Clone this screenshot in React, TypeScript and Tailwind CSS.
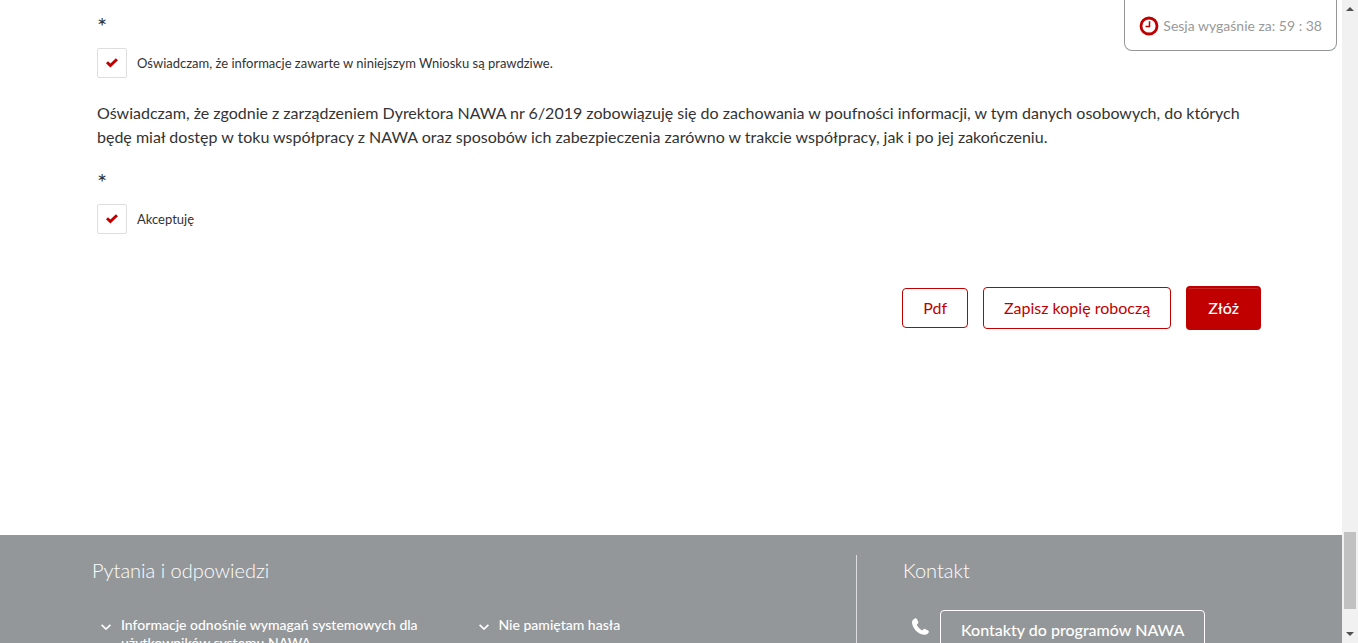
import { useState } from "react";
import type { ReactNode } from "react";

function Declaration({ id, children }: { id: string; children: ReactNode }) {
  const [checked, setChecked] = useState(true);
  return (
    <div>
      <p className="h-6 text-2xl leading-7">*</p>
      <div className="mt-3 flex items-center gap-2.5">
        <span className="grid size-[30px] shrink-0 place-items-center">
          <input
            id={id}
            type="checkbox"
            checked={checked}
            onChange={(e) => setChecked(e.target.checked)}
            className="col-start-1 row-start-1 size-[30px] appearance-none rounded-xs border border-[#dedede] bg-white"
          />
          {checked && (
            <svg
              viewBox="0 0 12 10"
              className="pointer-events-none col-start-1 row-start-1 h-[10px] w-3"
              aria-hidden="true"
            >
              <path d="M0 5.2 2 3.2 4.4 5.5 9.9 0.3 12 2.2 4.4 9.4Z" fill="#c00000" />
            </svg>
          )}
        </span>
        <label htmlFor={id} className="text-[13px] leading-5">
          {children}
        </label>
      </div>
    </div>
  );
}

function SessionTimer() {
  return (
    <div className="absolute top-0 right-[5px] flex h-[51px] items-center gap-1 rounded-b-lg border border-t-0 border-[#949799] bg-white px-3.5 pt-px">
      <svg viewBox="0 0 20 20" className="size-5" fill="none" stroke="#c00000" aria-hidden="true">
        <circle cx="10" cy="10" r="8" strokeWidth="2.8" />
        <path d="M10.5 5.2V10.5H6.5" strokeWidth="1.5" />
      </svg>
      <span className="text-sm leading-5 text-[#999999]">Sesja wygaśnie za: 59 : 38</span>
    </div>
  );
}

function Question({ children }: { children: ReactNode }) {
  return (
    <a href="#pytania" className="flex flex-1 items-start gap-2.5 pr-10">
      <svg viewBox="0 0 10 6" className="mt-2 h-1.5 w-2.5 shrink-0" fill="none" stroke="#fff" strokeWidth="1.7" aria-hidden="true">
        <path d="M0.6 0.8 5 5 9.4 0.8" />
      </svg>
      <span className="text-sm leading-[18px] font-medium">{children}</span>
    </a>
  );
}

function Footer() {
  return (
    <footer className="flex flex-1 bg-[#949799] pt-5 pl-[92px] text-white">
      <section className="w-[61.2%] border-r border-[#dddddd] pt-px">
        <h2 className="text-xl leading-7 font-light">Pytania i odpowiedzi</h2>
        <div className="mt-8 flex pl-[9px]">
          <Question>Informacje odnośnie wymagań systemowych dla użytkowników systemu NAWA</Question>
          <Question>Nie pamiętam hasła</Question>
        </div>
      </section>
      <section className="flex-1 pt-px pl-[46px]">
        <h2 className="text-xl leading-7 font-light">Kontakt</h2>
        <div className="mt-[26px] flex items-start gap-[11px] pl-[9px]">
          <svg viewBox="0 0 17 17" className="mt-2 size-[17px]" fill="#fff" aria-hidden="true">
            <path d="M2.5 0.7C3.4 0 4.4 0.1 4.9 1L6.2 3.8C6.6 4.7 6.2 5.3 5.4 5.9 4.6 6.5 4.7 6.9 5.1 7.6 6.2 9.4 7.6 10.9 9.4 12 10.1 12.4 10.5 12.4 11 11.7 11.6 10.9 12.3 10.6 13.1 11L16 12.5C16.9 13 17.1 13.7 16.6 14.6 15.6 16.3 14 17.1 12 16.8 8.5 16.2 5.5 14.6 3.2 11.9 1.3 9.6 0.1 7 0 4.3 0 2.8 1 1.7 2.5 0.7Z" />
          </svg>
          <button type="button" className="h-10 rounded-[4px] border border-white px-5 text-base leading-6 font-medium">
            Kontakty do programów NAWA
          </button>
        </div>
      </section>
    </footer>
  );
}

function Scrollbar() {
  return (
    <div className="flex w-4 shrink-0 flex-col items-center justify-between bg-[#f1f1f1] py-[7px]" aria-hidden="true">
      <svg viewBox="0 0 8 4" className="h-1 w-2">
        <path d="M0 4 4 0 8 4Z" fill="#505050" />
      </svg>
      <div className="flex flex-col items-center gap-[23px]">
        <div className="h-[77px] w-3 bg-[#c1c1c1]" />
        <svg viewBox="0 0 8 4" className="h-1 w-2">
          <path d="M0 0 4 4 8 0Z" fill="#505050" />
        </svg>
      </div>
    </div>
  );
}

export default function App() {
  return (
    <div className="flex h-screen overflow-hidden bg-white font-['Lato','Noto_Sans',sans-serif] text-[#333333]">
      <div className="relative flex min-w-0 flex-1 flex-col">
        <main className="shrink-0 pt-3 pr-[81px] pb-[205px] pl-[97px]">
          <Declaration id="prawdziwosc">
            Oświadczam, że informacje zawarte w niniejszym Wniosku są prawdziwe.
          </Declaration>
          <p className="mt-[23px] mb-[19px] text-base leading-6">
            Oświadczam, że zgodnie z zarządzeniem Dyrektora NAWA nr 6/2019 zobowiązuję się do zachowania w poufności
            informacji, w tym danych osobowych, do których będę miał dostęp w toku współpracy z NAWA oraz sposobów ich
            zabezpieczenia zarówno w trakcie współpracy, jak i po jej zakończeniu.
          </p>
          <Declaration id="poufnosc">Akceptuję</Declaration>
          <div className="mt-[52px] flex items-center justify-end gap-[15px]">
            <button type="button" className="h-10 rounded-[4px] border border-[#c00000] px-5 text-base text-[#c00000]">
              Pdf
            </button>
            <button type="button" className="h-[42px] rounded-[4px] border border-[#c00000] px-5 text-base text-[#c00000]">
              Zapisz kopię roboczą
            </button>
            <button
              type="submit"
              className="h-11 rounded-[4px] border-2 border-[#c00000] bg-[#c00000] px-5 text-base font-medium text-white shadow-[inset_0_1px_0_rgba(255,255,255,0.15)]"
            >
              Złóż
            </button>
          </div>
        </main>
        <Footer />
        <SessionTimer />
      </div>
      <Scrollbar />
    </div>
  );
}
